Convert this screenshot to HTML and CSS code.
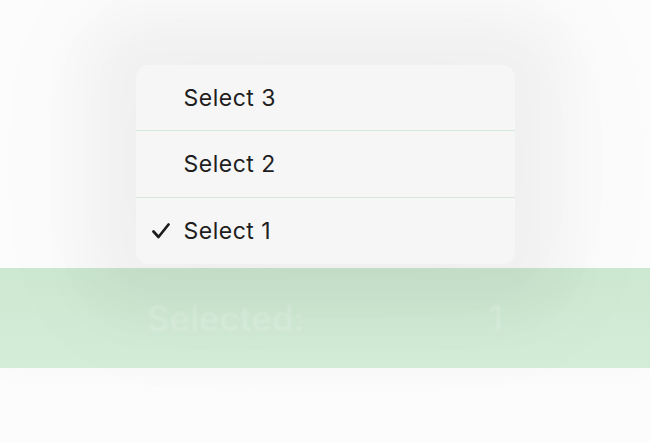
FILE: index.html
```html
<!DOCTYPE html>
<html>
<head>
<meta charset="utf-8">
<link rel="stylesheet" href="styles.css">
</head>
<body>
<div class="stage">
  <div class="menu">
    <div class="item">Select 3</div>
    <div class="item div-green">Select 2</div>
    <div class="item div-light selected">
      <svg class="check" width="18" height="16" viewBox="0 0 18 16"><polyline points="1.5,8.5 6.5,14 16.5,1.5" fill="none" stroke="#1c1c1c" stroke-width="2.7" stroke-linecap="round" stroke-linejoin="round"/></svg>
      Select 1
    </div>
  </div>
  <div class="bar">
    <span class="bar-label">Selected:</span>
    <span class="bar-value">1</span>
  </div>
</div>
</body>
</html>
```
FILE: styles.css
```css
html, body {
  margin: 0;
  padding: 0;
  background: #fcfcfc;
  width: 650px;
  height: 442px;
  overflow: hidden;
  font-family: Inter, "Noto Sans", sans-serif;
}
.stage {
  padding-top: 65px;
  display: flex;
  flex-direction: column;
  align-items: center;
}
.menu {
  position: relative;
  z-index: 2;
  width: 379px;
  background: #f6f6f6;
  border-radius: 13px;
  box-shadow: 0 0 60px 50px rgba(0, 0, 0, 0.035), 0 0 140px 70px rgba(0, 0, 0, 0.02);
}
.item {
  height: 65px;
  display: flex;
  align-items: center;
  padding-left: 48px;
  font-size: 23px;
  color: #1e1e1e;
  letter-spacing: 0.5px;
  position: relative;
}
.div-green { border-top: 1px solid #d3ebd8; height: 66px; }
.div-light { border-top: 1px solid #dae8dc; height: 66px; }
.check {
  position: absolute;
  left: 16px;
  top: 25px;
}
.bar {
  margin-top: 4px;
  width: 650px;
  height: 100px;
  background: linear-gradient(to bottom, #cde8d1, #d4edd9);
  display: flex;
  align-items: center;
  padding: 0 147px 0 147px;
  box-sizing: border-box;
  justify-content: space-between;
  position: relative;
  z-index: 1;
  box-shadow: 0 8px 24px rgba(0,0,0,0.015);
}
.bar-label, .bar-value {
  font-size: 35px;
  font-weight: 500;
  color: rgba(255, 255, 255, 0.2);
  filter: blur(1px);
}
```
